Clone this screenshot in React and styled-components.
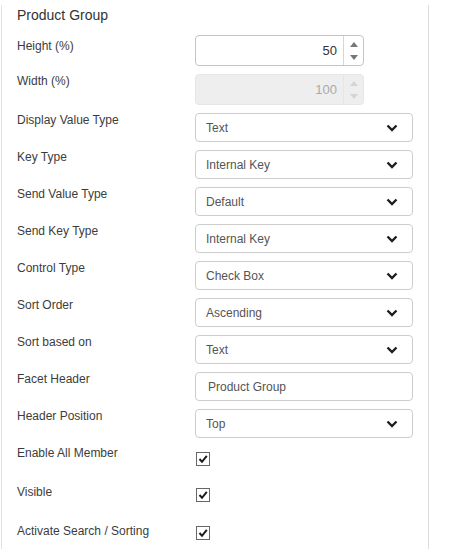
import React from "react";
import styled, { createGlobalStyle } from "styled-components";

// styles
const GlobalStyle = createGlobalStyle`
  body {
    margin: 0;
    background: #fff;
    font-family: "Liberation Sans", Arial, sans-serif;
  }
`;
const Panel = styled.div`
  margin-left: 1px;
  width: 411px;
  min-height: 549px;
  padding-left: 15px;
  border-left: 1px solid #e2e2e2;
  border-right: 1px solid #dcdcdc;
  box-sizing: content-box;
`;
const Title = styled.div`
  margin: 5px 0 10px;
  font-size: 14px;
  line-height: 20px;
  color: #333;
`;
const Row = styled.div`
  display: flex;
  align-items: flex-start;
  margin-bottom: 8px;
  min-height: ${(props) => props.h || 29}px;
`;
const Label = styled.div`
  width: 178px;
  flex: none;
  margin-top: ${(props) => props.offset || -1}px;
  font-size: 12px;
  line-height: 17px;
  color: #3c3c3c;
`;
const NumberBox = styled.div`
  width: 169px;
  height: 31px;
  box-sizing: border-box;
  display: flex;
  border: 1px solid ${(props) => (props.disabled ? "#e6e6e6" : "#c4c4c4")};
  border-radius: 4px;
  background: ${(props) => (props.disabled ? "#eeeeee" : "#fff")};
`;
const NumberValue = styled.div`
  flex: 1;
  text-align: right;
  padding-right: 6px;
  font-size: 13px;
  line-height: 29px;
  color: ${(props) => (props.disabled ? "#aaa" : "#333")};
`;
const Spinner = styled.div`
  width: 19px;
  display: flex;
  flex-direction: column;
  align-items: center;
  justify-content: center;
  gap: 8px;
  border-left: 1px solid ${(props) => (props.disabled ? "#e6e6e6" : "#d6d6d6")};
  color: ${(props) => (props.disabled ? "#d4d4d4" : "#777")};
`;
const SelectBox = styled.div`
  width: 218px;
  height: 29px;
  box-sizing: border-box;
  display: flex;
  align-items: center;
  justify-content: space-between;
  padding: 0 14px 0 ${(props) => props.pad || 10}px;
  border: 1px solid #cdcdcd;
  border-radius: 4px;
  background: #fff;
  font-size: 12px;
  color: #555;
`;
const CheckBox = styled.div`
  width: 12px;
  height: 12px;
  margin: ${(props) => props.top || 4}px 0 0 1px;
  border: 1px solid #666;
  background: #fff;
  display: flex;
  align-items: center;
  justify-content: center;
`;

function Chevron() {
  return (
    <svg width="12" height="8" viewBox="0 0 12 8">
      <polyline
        points="1.5,1.5 6,6 10.5,1.5"
        fill="none"
        stroke="#1e1e1e"
        strokeWidth="2.4"
      />
    </svg>
  );
}

function NumberInput({ value, disabled }) {
  return (
    <NumberBox disabled={disabled}>
      <NumberValue disabled={disabled}>{value}</NumberValue>
      <Spinner disabled={disabled}>
        <svg width="8" height="5" viewBox="0 0 8 5">
          <polygon points="0,5 4,0 8,5" fill="currentColor" />
        </svg>
        <svg width="8" height="5" viewBox="0 0 8 5">
          <polygon points="0,0 8,0 4,5" fill="currentColor" />
        </svg>
      </Spinner>
    </NumberBox>
  );
}

function Check({ top }) {
  return (
    <CheckBox top={top}>
      <svg width="10" height="10" viewBox="0 0 10 10">
        <polyline
          points="1.5,5 4,7.8 8.8,1.8"
          fill="none"
          stroke="#1a1a1a"
          strokeWidth="2"
        />
      </svg>
    </CheckBox>
  );
}

const selects = [
  { label: "Display Value Type", value: "Text" },
  { label: "Key Type", value: "Internal Key" },
  { label: "Send Value Type", value: "Default" },
  { label: "Send Key Type", value: "Internal Key" },
  { label: "Control Type", value: "Check Box" },
  { label: "Sort Order", value: "Ascending" },
  { label: "Sort based on", value: "Text" },
  { label: "Facet Header", value: "Product Group", text: true },
  { label: "Header Position", value: "Top" },
];

const checks = [
  { label: "Enable All Member", top: 6 },
  { label: "Visible", top: 3 },
  { label: "Activate Search / Sorting", top: 2 },
];

export default function App() {
  return (
    <>
      <GlobalStyle />
      <Panel>
        <Title>Product Group</Title>
        <Row h={31}>
          <Label offset={3}>Height (%)</Label>
          <NumberInput value="50" />
        </Row>
        <Row h={31}>
          <Label>Width (%)</Label>
          <NumberInput value="100" disabled />
        </Row>
        {selects.map((s) => (
          <Row key={s.label}>
            <Label>{s.label}</Label>
            <SelectBox pad={s.text ? 12 : 10}>
              <span>{s.value}</span>
              {s.text ? null : <Chevron />}
            </SelectBox>
          </Row>
        ))}
        {checks.map((c) => (
          <Row key={c.label} h={31}>
            <Label>{c.label}</Label>
            <Check top={c.top} />
          </Row>
        ))}
      </Panel>
    </>
  );
}
